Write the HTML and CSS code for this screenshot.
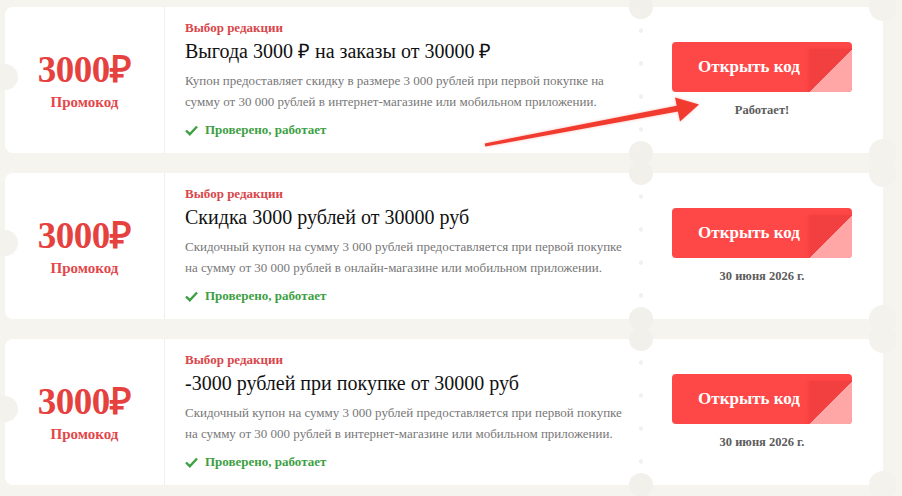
FILE: index.html
```html
<!DOCTYPE html>
<html>
<head>
	<meta charset="utf-8">
	<title>Промокоды</title>
	<link rel="stylesheet" href="styles.css">
</head>
<body>
	<div class="coupon-list">
		<div class="coupon">
			<div class="coupon-value">
				<div class="amount">3000₽</div>
				<div class="kind">Промокод</div>
			</div>
			<div class="coupon-main">
				<div class="label">Выбор редакции</div>
				<div class="title">Выгода 3000 ₽ на заказы от 30000 ₽</div>
				<p class="desc">Купон предоставляет скидку в размере 3 000 рублей при первой покупке на сумму от 30 000 рублей в интернет-магазине или мобильном приложении.</p>
				<div class="verified">
					<svg width="13" height="11" viewBox="0 0 13 11"><polyline points="1,5.5 4.8,9.2 12,1.5" fill="none" stroke="#3e9f45" stroke-width="2.4"/></svg>
					Проверено, работает
				</div>
			</div>
			<div class="perforation"></div>
			<div class="coupon-side">
				<button class="open-code">Открыть код</button>
				<div class="note">Работает!</div>
			</div>
		</div>

		<div class="coupon">
			<div class="coupon-value">
				<div class="amount">3000₽</div>
				<div class="kind">Промокод</div>
			</div>
			<div class="coupon-main">
				<div class="label">Выбор редакции</div>
				<div class="title">Скидка 3000 рублей от 30000 руб</div>
				<p class="desc">Скидочный купон на сумму 3 000 рублей предоставляется при первой покупке на сумму от 30 000 рублей в онлайн-магазине или мобильном приложении.</p>
				<div class="verified">
					<svg width="13" height="11" viewBox="0 0 13 11"><polyline points="1,5.5 4.8,9.2 12,1.5" fill="none" stroke="#3e9f45" stroke-width="2.4"/></svg>
					Проверено, работает
				</div>
			</div>
			<div class="perforation"></div>
			<div class="coupon-side">
				<button class="open-code">Открыть код</button>
				<div class="note">30 июня 2026 г.</div>
			</div>
		</div>

		<div class="coupon">
			<div class="coupon-value">
				<div class="amount">3000₽</div>
				<div class="kind">Промокод</div>
			</div>
			<div class="coupon-main">
				<div class="label">Выбор редакции</div>
				<div class="title">-3000 рублей при покупке от 30000 руб</div>
				<p class="desc">Скидочный купон на сумму 3 000 рублей предоставляется при первой покупке на сумму от 30 000 рублей в интернет-магазине или мобильном приложении.</p>
				<div class="verified">
					<svg width="13" height="11" viewBox="0 0 13 11"><polyline points="1,5.5 4.8,9.2 12,1.5" fill="none" stroke="#3e9f45" stroke-width="2.4"/></svg>
					Проверено, работает
				</div>
			</div>
			<div class="perforation"></div>
			<div class="coupon-side">
				<button class="open-code">Открыть код</button>
				<div class="note">30 июня 2026 г.</div>
			</div>
		</div>
	</div>

	<!-- pointer drawn over the first coupon -->
	<svg class="pointer" width="902" height="496" viewBox="0 0 902 496">
		<defs>
			<filter id="glow" x="-10%" y="-50%" width="120%" height="200%">
				<feDropShadow dx="0" dy="0" stdDeviation="1.5" flood-color="#f23a30" flood-opacity="0.35"/>
			</filter>
		</defs>
		<g fill="#f13a2f" filter="url(#glow)">
			<polygon points="485.3,146.6 484.7,143.4 679.4,105.2 680.6,111"/>
			<polygon points="675,97.5 699,104.5 680,121.5"/>
		</g>
	</svg>
</body>
</html>
```

FILE: styles.css
```css
body {
	margin: 0;
	padding: 7px 0 0 5px;
	background-color: #f5f4ef;
	font-family: 'Times New Roman', serif;
	position: relative;
	height: 489px;
	overflow: hidden;
}

.coupon-list {
	display: flex;
	flex-direction: column;
	gap: 20px;
}

.coupon {
	position: relative;
	display: flex;
	width: 878px;
	height: 146px;
	background-color: #fff;
	border-radius: 8px;
}

/* notch on the left edge */
.coupon::before {
	content: '';
	position: absolute;
	left: -13px;
	top: 57px;
	width: 26px;
	height: 26px;
	border-radius: 50%;
	background-color: #f3f2ed;
}

.coupon-value {
	width: 160px;
	border-right: 1px solid #efefef;
	box-sizing: border-box;
	display: flex;
	flex-direction: column;
	align-items: center;
	justify-content: center;
	color: #e5423f;
	font-weight: bold;
	padding-top: 2px;
}

.coupon-value .amount {
	font-size: 37px;
	line-height: 37px;
	letter-spacing: -0.5px;
}

.coupon-value .kind {
	margin-top: 5px;
	font-size: 15px;
	line-height: 18px;
	color: #e2484a;
}

.coupon-main {
	width: 472px;
	box-sizing: border-box;
	padding: 12px 8px 0 20px;
}

.label {
	font-size: 13px;
	line-height: 18px;
	font-weight: bold;
	color: #d9474b;
}

.title {
	margin-top: 1px;
	font-size: 20px;
	line-height: 26px;
	color: #111;
}

.desc {
	margin: 6px 0 0 0;
	font-size: 13px;
	line-height: 21px;
	color: #777;
}

.verified {
	margin-top: 9px;
	display: flex;
	align-items: center;
	gap: 7px;
	font-size: 13px;
	line-height: 18px;
	font-weight: bold;
	color: #3e9f45;
}

/* dotted tear line with round cut-outs */
.perforation {
	position: relative;
	width: 8px;
	background-image: radial-gradient(circle, #f1f1ef 2px, transparent 2.5px);
	background-size: 8px 33px;
	background-position: 0 7px;
	background-repeat: repeat-y;
}

.perforation::before,
.perforation::after {
	content: '';
	position: absolute;
	left: -8px;
	width: 24px;
	height: 24px;
	border-radius: 50%;
	background-color: #f1f0eb;
}

.perforation::before {
	top: -12px;
}

.perforation::after {
	bottom: -12px;
}

.coupon-side {
	position: relative;
	flex: 1;
	display: flex;
	flex-direction: column;
	align-items: center;
	padding: 35px 4px 0 0;
}

/* concave corners on the right edge */
.coupon-side::before,
.coupon-side::after {
	content: '';
	position: absolute;
	right: -14px;
	width: 28px;
	height: 28px;
	border-radius: 50%;
	background-color: #f3f2ed;
}

.coupon-side::before {
	top: -14px;
}

.coupon-side::after {
	bottom: -14px;
}

.open-code {
	position: relative;
	width: 180px;
	height: 50px;
	padding: 0 26px 0 0;
	border: none;
	border-radius: 4px;
	overflow: hidden;
	background-color: #fe4747;
	color: #fff;
	font-family: inherit;
	font-size: 17px;
	font-weight: bold;
	cursor: pointer;
}

/* folded corner */
.open-code::after {
	content: '';
	position: absolute;
	right: 0;
	bottom: 0;
	width: 42px;
	height: 43px;
	background: linear-gradient(135deg, #f23f3f 50%, #ffa7a7 50%);
	box-shadow: -2px 0 3px rgba(180, 20, 20, 0.12);
}

.note {
	margin-top: 10px;
	font-size: 12.5px;
	line-height: 16px;
	font-weight: bold;
	color: #5c5c5c;
}

.pointer {
	position: absolute;
	left: 0;
	top: 0;
	pointer-events: none;
}
```
